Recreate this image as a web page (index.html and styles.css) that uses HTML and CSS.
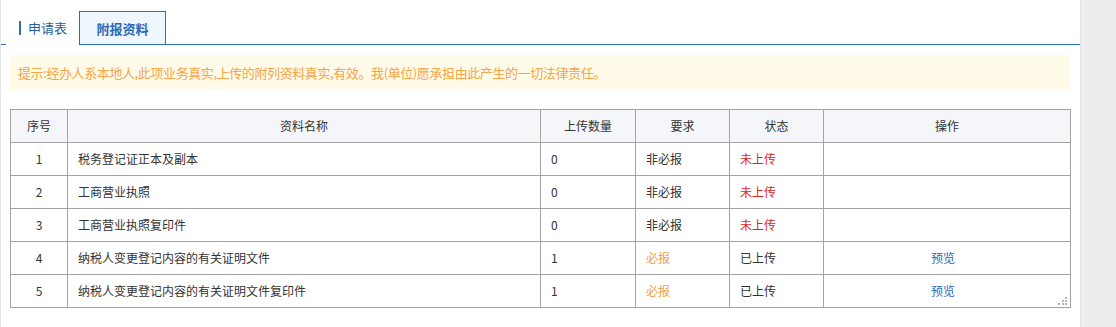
FILE: index.html
```html
<!DOCTYPE html>
<html lang="zh-CN">
<head>
    <meta charset="UTF-8">
    <title>附报资料</title>
    <link rel="stylesheet" href="styles.css">
</head>
<body>
    <div class="page">
        <div class="tabs">
            <div class="tab tab-plain"><span class="tab-bar"></span>申请表</div>
            <div class="tab tab-active">附报资料</div>
        </div>

        <div class="content">
            <div class="notice">提示:经办人系本地人,此项业务真实,上传的附列资料真实,有效。我(单位)愿承担由此产生的一切法律责任。</div>

            <table class="file-table">
                <colgroup>
                    <col class="c-no">
                    <col class="c-name">
                    <col class="c-count">
                    <col class="c-req">
                    <col class="c-state">
                    <col class="c-op">
                </colgroup>
                <thead>
                    <tr>
                        <th>序号</th>
                        <th>资料名称</th>
                        <th>上传数量</th>
                        <th>要求</th>
                        <th>状态</th>
                        <th>操作</th>
                    </tr>
                </thead>
                <tbody>
                    <tr>
                        <td class="center">1</td>
                        <td>税务登记证正本及副本</td>
                        <td>0</td>
                        <td>非必报</td>
                        <td class="not-uploaded">未上传</td>
                        <td class="op"></td>
                    </tr>
                    <tr>
                        <td class="center">2</td>
                        <td>工商营业执照</td>
                        <td>0</td>
                        <td>非必报</td>
                        <td class="not-uploaded">未上传</td>
                        <td class="op"></td>
                    </tr>
                    <tr>
                        <td class="center">3</td>
                        <td>工商营业执照复印件</td>
                        <td>0</td>
                        <td>非必报</td>
                        <td class="not-uploaded">未上传</td>
                        <td class="op"></td>
                    </tr>
                    <tr>
                        <td class="center">4</td>
                        <td>纳税人变更登记内容的有关证明文件</td>
                        <td>1</td>
                        <td class="required">必报</td>
                        <td>已上传</td>
                        <td class="op"><a class="preview" href="#">预览</a></td>
                    </tr>
                    <tr>
                        <td class="center">5</td>
                        <td>纳税人变更登记内容的有关证明文件复印件</td>
                        <td>1</td>
                        <td class="required">必报</td>
                        <td>已上传</td>
                        <td class="op last-cell">
                            <a class="preview" href="#">预览</a>
                            <svg class="grip" width="9" height="9" viewBox="0 0 9 9">
                                <rect x="7" y="1" width="2" height="2" fill="#b5b5b5"/>
                                <rect x="4" y="4" width="2" height="2" fill="#b5b5b5"/>
                                <rect x="7" y="4" width="2" height="2" fill="#b5b5b5"/>
                                <rect x="0" y="7" width="2" height="2" fill="#b5b5b5"/>
                                <rect x="4" y="7" width="2" height="2" fill="#b5b5b5"/>
                                <rect x="7" y="7" width="2" height="2" fill="#b5b5b5"/>
                            </svg>
                        </td>
                    </tr>
                </tbody>
            </table>
        </div>
    </div>
</body>
</html>
```

FILE: styles.css
```css
body {
    margin: 0;
    background-color: #ededf0;
    font-family: "Noto Sans CJK SC", "Liberation Sans", sans-serif;
    font-size: 12px;
    color: #333;
}

.page {
    width: 1079px;
    height: 327px;
    background-color: #fff;
    border-left: 1px solid #e6e6e6;
    border-right: 1px solid #e2e2e6;
}

/* tab strip, blue rule along the bottom */
.tabs {
    display: flex;
    align-items: flex-end;
    height: 45px;
    margin-bottom: -1px;
    border-bottom: 1px solid #2b6fb5;
    box-sizing: border-box;
}

.tab {
    height: 33px;
    box-sizing: border-box;
    font-size: 13px;
    display: flex;
    align-items: center;
}

.tab-plain {
    margin-left: 5px;
    margin-bottom: -1px;
    width: 73px;
    height: 34px;
    padding-left: 13px;
    padding-bottom: 1px;
    color: #1f5fa6;
    background-color: #fff;
}

.tab-bar {
    display: inline-block;
    width: 2px;
    height: 14px;
    margin-right: 7px;
    background-color: #2b6fb5;
}

.tab-active {
    width: 87px;
    justify-content: center;
    color: #2d68b5;
    font-weight: bold;
    background-color: #eef6fe;
    border: 1px solid #2b6fb5;
    border-bottom: none;
}

.content {
    padding: 11px 10px 0 9px;
}

.notice {
    height: 35px;
    line-height: 35px;
    padding-left: 8px;
    background-color: #fffbe8;
    color: #f4a54a;
    font-size: 13px;
    letter-spacing: -0.4px;
}

.file-table {
    margin-top: 19px;
    width: 1061px;
    border-collapse: collapse;
    table-layout: fixed;
}

.c-no { width: 57px; }
.c-name { width: 473px; }
.c-count { width: 95px; }
.c-req { width: 94px; }
.c-state { width: 94px; }
.c-op { width: 247px; }

.file-table th,
.file-table td {
    border: 1px solid #a3a3a3;
    height: 32px;
    padding: 0 10px;
    font-weight: normal;
    line-height: 16px;
}

.file-table th {
    background-color: #f5f6fa;
    text-align: center;
}

.file-table td {
    text-align: left;
}

.file-table td.center {
    text-align: center;
}

.file-table td.op {
    text-align: center;
    padding-right: 18px;
}

.not-uploaded {
    color: #e0231c;
}

.required {
    color: #f2a04a;
}

.preview {
    color: #2b68b8;
    text-decoration: none;
}

.last-cell {
    position: relative;
}

.grip {
    position: absolute;
    right: 3px;
    bottom: 2px;
}
```
